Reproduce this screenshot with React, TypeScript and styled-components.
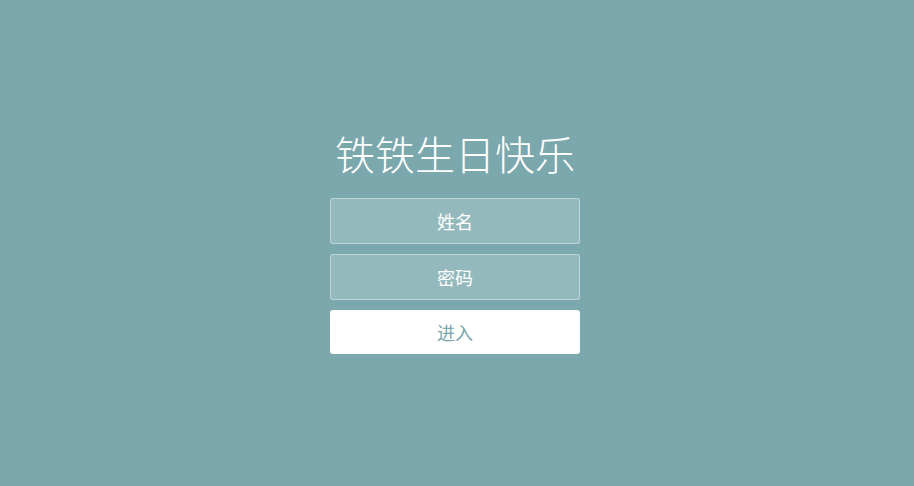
import React from 'react';
import styled, {createGlobalStyle} from 'styled-components';

const GlobalStyle = createGlobalStyle`
    html, body {
        margin: 0;
        padding: 0;
        height: 100%;
        background: #7aa8ad;
        font-family: "Noto Sans CJK SC", "Noto Sans", sans-serif;
    }
    #root {
        height: 100%;
    }
`;

const Page = styled.div`
    height: 486px;
    display: flex;
    flex-direction: column;
    align-items: center;
    padding: 129px 4px 0 0;
    box-sizing: border-box;
`;

const Title = styled.h1`
    margin: 0 0 21px;
    font-size: 40px;
    line-height: 48px;
    font-weight: 300;
    color: #fff;
`;

const Form = styled.form`
    display: flex;
    flex-direction: column;
    gap: 10px;
    width: 250px;
`;

const Field = styled.input`
    box-sizing: border-box;
    width: 250px;
    height: 46px;
    padding: 0 15px;
    border: 1px solid rgba(255, 255, 255, 0.4);
    border-radius: 3px;
    background: rgba(255, 255, 255, 0.2);
    color: #fff;
    font-family: inherit;
    font-size: 18px;
    text-align: center;
    outline: none;
    &::placeholder {
        color: #fff;
        opacity: 1;
    }
`;

const Enter = styled.button`
    box-sizing: border-box;
    width: 250px;
    height: 44px;
    border: 0;
    border-radius: 3px;
    background: #fff;
    color: #7aa8ad;
    font-family: inherit;
    font-size: 18px;
    cursor: pointer;
`;

const App: React.FunctionComponent = () => {
    return (
        <Page>
            <GlobalStyle/>
            <Title>铁铁生日快乐</Title>
            <Form onSubmit={(e) => e.preventDefault()}>
                <Field type='text' placeholder='姓名'/>
                <Field type='password' placeholder='密码'/>
                <Enter type='submit'>进入</Enter>
            </Form>
        </Page>
    );
}

export default App;
